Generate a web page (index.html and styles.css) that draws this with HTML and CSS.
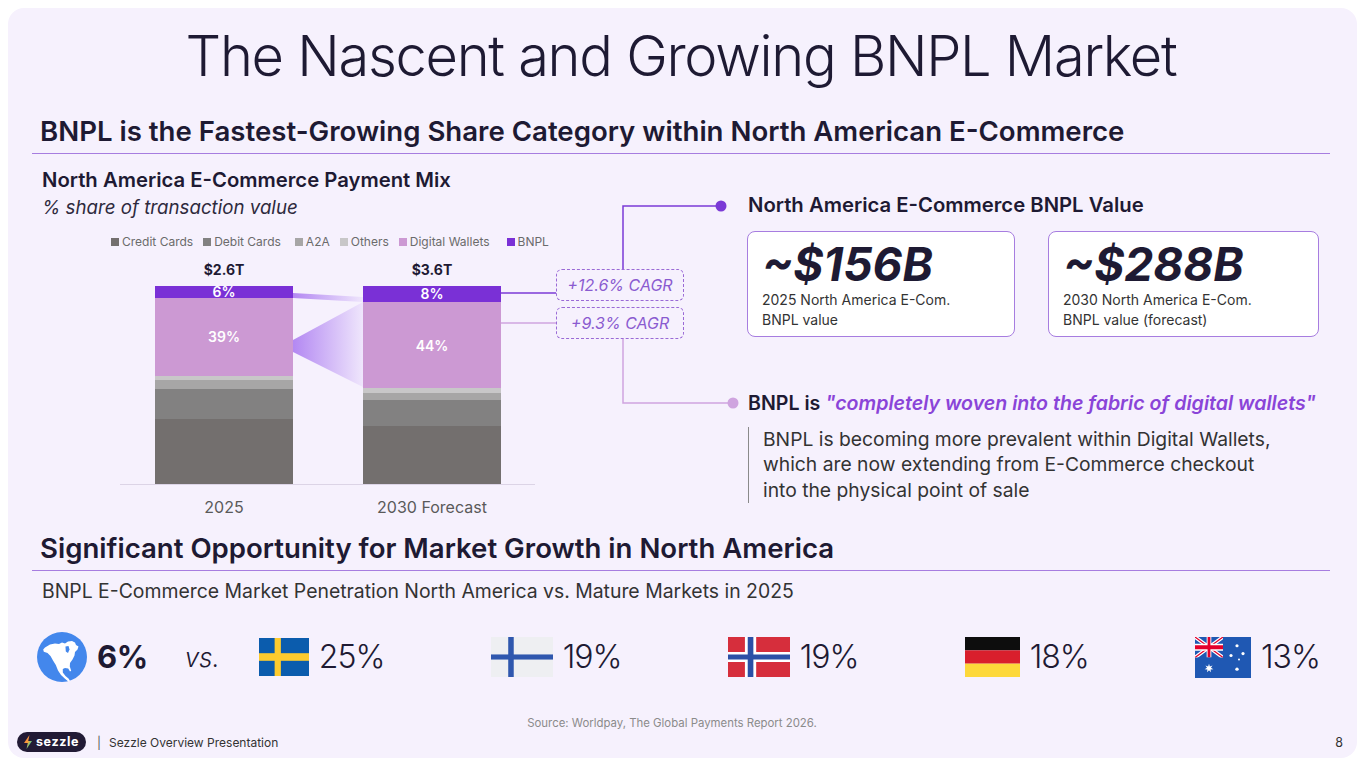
FILE: index.html
```html
<!DOCTYPE html>
<html lang="en">
<head>
<meta charset="utf-8">
<title>The Nascent and Growing BNPL Market</title>
<link rel="stylesheet" href="styles.css">
</head>
<body>
<main class="slide">
  <h1 class="title">The Nascent and Growing BNPL Market</h1>
  <h2 class="section-head">BNPL is the Fastest-Growing Share Category within North American E-Commerce</h2>

  <section class="top-row">
    <div class="chart-col">
      <h3 class="chart-title">North America E-Commerce Payment Mix</h3>
      <p class="chart-sub">% share of transaction value</p>
      <ul class="legend">
        <li><span class="sw sw-credit"></span>Credit Cards</li>
        <li><span class="sw sw-debit"></span>Debit Cards</li>
        <li class="lg-a2a"><span class="sw sw-a2a"></span>A2A</li>
        <li><span class="sw sw-others"></span>Others</li>
        <li><span class="sw sw-dw"></span>Digital Wallets</li>
        <li class="lg-bnpl"><span class="sw sw-bnpl"></span>BNPL</li>
      </ul>
      <svg class="chart" width="516" height="265" viewBox="0 0 516 265">
        <defs>
          <linearGradient id="wedge" x1="0" y1="0" x2="1" y2="0">
            <stop offset="0" stop-color="#b388f2"/>
            <stop offset="1" stop-color="#efe6fc"/>
          </linearGradient>
        </defs>
        <text class="total" x="184" y="20">$2.6T</text>
        <text class="total" x="392" y="20">$3.6T</text>
        <!-- 2025 -->
        <rect x="115" y="164" width="138" height="65" fill="#736f6e"/>
        <rect x="115" y="134" width="138" height="30" fill="#828181"/>
        <rect x="115" y="125" width="138" height="9" fill="#a7a6a6"/>
        <rect x="115" y="121" width="138" height="4" fill="#c8c7c8"/>
        <rect x="115" y="43" width="138" height="78" fill="#cc99d3"/>
        <rect x="115" y="31" width="138" height="12" fill="#7a30d6"/>
        <!-- 2030 -->
        <rect x="323" y="171" width="138" height="58" fill="#736f6e"/>
        <rect x="323" y="145" width="138" height="26" fill="#828181"/>
        <rect x="323" y="138" width="138" height="7" fill="#a7a6a6"/>
        <rect x="323" y="133" width="138" height="5" fill="#c8c7c8"/>
        <rect x="323" y="47" width="138" height="86" fill="#cc99d3"/>
        <rect x="323" y="31" width="138" height="16" fill="#7a30d6"/>
        <!-- wedges -->
        <polygon points="253,38 323,42 323,47 253,43" fill="url(#wedge)"/>
        <polygon points="253,85 323,47 323,132 253,97" fill="url(#wedge)"/>
        <text class="seg" x="184" y="42">6%</text>
        <text class="seg" x="184" y="87">39%</text>
        <text class="seg" x="392" y="44">8%</text>
        <text class="seg" x="392" y="96">44%</text>
        <line x1="80" y1="229.5" x2="495" y2="229.5" stroke="#dcd4e6" stroke-width="1"/>
        <text class="axis" x="184" y="258">2025</text>
        <text class="axis" x="392" y="258">2030 Forecast</text>
        <line x1="461" y1="38" x2="516" y2="38" stroke="#7b3ad6" stroke-width="1.5"/>
        <line x1="461" y1="68" x2="516" y2="68" stroke="#cfa4df" stroke-width="1.5"/>
      </svg>
    </div>

    <div class="link-col">
      <svg class="links" width="189" height="358" viewBox="0 0 189 358">
        <path d="M67 107 V44 H165" fill="none" stroke="#7b3ad6" stroke-width="1.5"/>
        <circle cx="165" cy="44" r="5.5" fill="#7b3ad6"/>
        <path d="M67 177 V241 H177" fill="none" stroke="#cfa4df" stroke-width="1.5"/>
        <circle cx="177" cy="241" r="5.5" fill="#cfa4df"/>
      </svg>
      <div class="cagr cagr-bnpl">+12.6% CAGR</div>
      <div class="cagr cagr-dw">+9.3% CAGR</div>
    </div>

    <div class="info-col">
      <h3 class="info-head">North America E-Commerce BNPL Value</h3>
      <div class="stat-row">
        <div class="stat stat-a">
          <div class="stat-num">~$156B</div>
          <div class="stat-label">2025 North America E-Com.<br>BNPL value</div>
        </div>
        <div class="stat stat-b">
          <div class="stat-num">~$288B</div>
          <div class="stat-label">2030 North America E-Com.<br>BNPL value (forecast)</div>
        </div>
      </div>
      <h3 class="info-head quote-head">BNPL is <em>"completely woven into the fabric of digital wallets"</em></h3>
      <p class="quote-body">BNPL is becoming more prevalent within Digital Wallets,<br>which are now extending from E-Commerce checkout<br>into the physical point of sale</p>
    </div>
  </section>

  <h2 class="section-head section-head-2">Significant Opportunity for Market Growth in North America</h2>
  <p class="pen-sub">BNPL E-Commerce Market Penetration North America vs. Mature Markets in 2025</p>

  <div class="markets">
    <div class="mkt mkt-na">
      <svg class="globe" width="50" height="50" viewBox="0 0 50 50">
        <circle cx="25" cy="25" r="25" fill="#4387ec"/>
        <path d="M8 15.5 L13 12.5 L18 11.5 L22 12 L25 10.5 L28 11.5 L31 9.5 L35 9 L38 10.5 L39 13 L41.5 14.5 L40.5 17.5 L38 20 L37.5 23.5 L35.5 27.5 L33 31 L32.8 34.5 L34.2 38.8 L33 39.5 L31.2 36.5 L28 36 L25.8 37 L25.8 40.5 L28.5 44 L31.5 46.5 L33 48.8 L31 49.2 L28 46.8 L24 43 L21 38.5 L18.8 33 L16 28.5 L13.5 24 L10.5 21 L6.8 19.8 L6.2 17.5 Z" fill="#fff"/>
        <path d="M28.5 14.5 L31.5 14 L32.5 17.5 L31 21 L28.8 19.5 Z" fill="#4387ec"/>
      </svg>
      <span class="pct pct-na">6%</span>
      <span class="vs">vs.</span>
      <svg class="flag flag-se" viewBox="0 0 16 10" preserveAspectRatio="none">
        <rect width="16" height="10" fill="#0b5cad"/>
        <rect x="5" width="2" height="10" fill="#fdcb2e"/>
        <rect y="4" width="16" height="2" fill="#fdcb2e"/>
      </svg>
      <span class="pct">25%</span>
    </div>
    <div class="mkt">
      <svg class="flag flag-fi" viewBox="0 0 18 11" preserveAspectRatio="none">
        <rect width="18" height="11" fill="#eeeff2"/>
        <rect x="5" width="1.6" height="11" fill="#2f57ae"/>
        <rect y="4.8" width="18" height="1.4" fill="#2f57ae"/>
      </svg>
      <span class="pct">19%</span>
    </div>
    <div class="mkt">
      <svg class="flag flag-no" viewBox="0 0 22 16" preserveAspectRatio="none">
        <rect width="22" height="16" fill="#d62e3c"/>
        <rect x="6" width="4" height="16" fill="#fff"/>
        <rect y="6" width="22" height="4" fill="#fff"/>
        <rect x="7" width="2" height="16" fill="#2c50a6"/>
        <rect y="7" width="22" height="2" fill="#2c50a6"/>
      </svg>
      <span class="pct">19%</span>
    </div>
    <div class="mkt">
      <svg class="flag flag-de" viewBox="0 0 5 3" preserveAspectRatio="none">
        <rect width="5" height="1" fill="#0d0d0d"/>
        <rect y="1" width="5" height="1" fill="#d91f2c"/>
        <rect y="2" width="5" height="1" fill="#fdd83a"/>
      </svg>
      <span class="pct">18%</span>
    </div>
    <div class="mkt">
      <svg class="flag flag-au" viewBox="0 0 56 42" preserveAspectRatio="none">
        <defs>
          <clipPath id="uj"><rect width="60" height="30"/></clipPath>
        </defs>
        <rect width="56" height="42" fill="#1f58b3"/>
        <g transform="scale(0.4667 0.7)" clip-path="url(#uj)">
          <path d="M0 0L60 30M60 0L0 30" stroke="#fff" stroke-width="6"/>
          <path d="M0 0L60 30M60 0L0 30" stroke="#e4002b" stroke-width="2"/>
          <path d="M30 0V30M0 15H60" stroke="#fff" stroke-width="10"/>
          <path d="M30 0V30M0 15H60" stroke="#e4002b" stroke-width="6"/>
        </g>
        <polygon points="14,27.5 14.87,30.2 17.52,29.19 15.95,31.56 18.39,33 15.56,33.25 15.95,36.05 14,34 12.05,36.05 12.44,33.25 9.61,33 12.05,31.56 10.48,29.19 13.13,30.2" fill="#fff"/>
        <circle cx="42" cy="9" r="1.6" fill="#fff"/>
        <circle cx="36" cy="19" r="1.6" fill="#fff"/>
        <circle cx="48" cy="17" r="1.6" fill="#fff"/>
        <circle cx="44" cy="23" r="1" fill="#fff"/>
        <circle cx="42" cy="33" r="1.7" fill="#fff"/>
      </svg>
      <span class="pct">13%</span>
    </div>
  </div>

  <p class="source">Source: Worldpay, The Global Payments Report 2026.</p>

  <footer class="foot">
    <div class="logo">
      <svg class="bolt" width="10" height="14" viewBox="0 0 10 14">
        <defs>
          <linearGradient id="boltg" x1="0" y1="0" x2="1" y2="1">
            <stop offset="0" stop-color="#ff6a3d"/>
            <stop offset="0.5" stop-color="#f7a23b"/>
            <stop offset="0.75" stop-color="#3fd29a"/>
            <stop offset="1" stop-color="#8b5cf6"/>
          </linearGradient>
        </defs>
        <path d="M6.5 0 L1 8 H4.8 L3.5 14 L9 6 H5.2 Z" fill="url(#boltg)"/>
      </svg>
      <span class="logo-text">sezzle</span>
    </div>
    <span class="sep">|</span>
    <span class="foot-text">Sezzle Overview Presentation</span>
    <span class="page">8</span>
  </footer>
</main>
</body>
</html>
```

FILE: styles.css
```css
* { box-sizing: border-box; margin: 0; padding: 0; }

html, body {
  width: 1365px;
  height: 768px;
  background: #ffffff;
  overflow: hidden;
}

body {
  font-family: Inter, Roboto, "Liberation Sans", Arial, sans-serif;
  color: #1e1a33;
}

.slide {
  margin: 8px;
  width: 1349px;
  height: 750px;
  border-radius: 16px;
  background: #f6f1fd;
  padding: 15.5px 27px 0 24px;
  display: flex;
  flex-direction: column;
}

.title {
  font-size: 56px;
  font-weight: 300;
  line-height: 64px;
  letter-spacing: -1.3px;
  text-align: center;
  color: #1e1a33;
}

.section-head {
  margin-top: 26.5px;
  font-size: 27.6px;
  font-weight: 600;
  line-height: 34px;
  padding: 0 0 5px 8px;
  border-bottom: 1.5px solid #a77de0;
}

.top-row {
  display: flex;
  margin-top: 7.5px;
  height: 358px;
  padding-left: 8px;
}

.chart-col {
  width: 516px;
  flex: none;
}

.chart-title {
  margin-top: 6px;
  padding-left: 2px;
  font-size: 20.3px;
  font-weight: 600;
  line-height: 24px;
}

.chart-sub {
  margin-top: 4px;
  padding-left: 2px;
  font-size: 18.7px;
  font-style: italic;
  line-height: 24px;
  color: #2e2a3d;
}

.legend {
  list-style: none;
  display: flex;
  gap: 10px;
  margin-top: 14px;
  padding-left: 71px;
  font-size: 12px;
  line-height: 16px;
  color: #6b6b6b;
}

.legend li { display: flex; align-items: center; }
.legend .lg-a2a { margin-left: 4px; }
.legend .lg-bnpl { margin-left: 7px; }

.sw { width: 8px; height: 8px; margin-right: 3px; }
.sw-credit { background: #736f6e; }
.sw-debit { background: #828181; }
.sw-a2a { background: #a7a6a6; }
.sw-others { background: #c8c7c8; }
.sw-dw { background: #cc99d3; }
.sw-bnpl { background: #7a30d6; }

.chart {
  display: block;
  margin-top: 5px;
  overflow: visible;
}

.chart text {
  font-family: Inter, Roboto, "Liberation Sans", Arial, sans-serif;
  text-anchor: middle;
}

.chart .total { font-size: 14px; font-weight: 700; fill: #1e1a33; }
.chart .seg { font-size: 14px; font-weight: 600; fill: #ffffff; }
.chart .axis { font-size: 16px; fill: #5a5a5a; }

.link-col {
  width: 189px;
  flex: none;
  position: relative;
}

.links {
  position: absolute;
  left: 0;
  top: 0;
  overflow: visible;
}

.cagr {
  position: relative;
  width: 128px;
  height: 32px;
  border: 1.5px dashed #9a6ad6;
  border-radius: 6px;
  display: flex;
  align-items: center;
  justify-content: center;
  font-size: 16px;
  font-style: italic;
  color: #8a5bd0;
  background: #f6f1fd;
}

.cagr-bnpl { margin-top: 107px; }
.cagr-dw { margin-top: 6px; }

.info-col {
  flex: 1;
  padding-left: 3px;
}

.info-head {
  margin-top: 31px;
  font-size: 20.3px;
  font-weight: 600;
  line-height: 24px;
}

.stat-row {
  display: flex;
  gap: 33px;
  margin-top: 14px;
  margin-left: -1px;
}

.stat {
  height: 106px;
  background: #ffffff;
  border: 1.5px solid #a77de0;
  border-radius: 8px;
  padding: 9px 14px 0;
}

.stat-a { width: 268px; }
.stat-b { width: 271px; }

.stat-num {
  font-size: 46px;
  font-weight: 700;
  font-style: italic;
  line-height: 46px;
  color: #1e1a33;
}

.stat-label {
  margin-top: 3.5px;
  font-size: 14px;
  line-height: 20px;
  color: #333333;
}

.quote-head {
  margin-top: 54px;
  font-size: 19.6px;
}

.quote-head em {
  color: #8a44d8;
  font-style: italic;
}

.quote-body {
  margin-top: 12px;
  border-left: 1.5px solid #8a8a8a;
  padding-left: 14px;
  font-size: 19.3px;
  line-height: 25.5px;
  color: #333333;
}

.section-head-2 { margin-top: 11px; }

.pen-sub {
  margin-top: 8.5px;
  padding-left: 10px;
  font-size: 19.4px;
  line-height: 24px;
  color: #333333;
}

.markets {
  display: flex;
  justify-content: space-between;
  align-items: center;
  margin-top: 29px;
  height: 50px;
  padding: 0 10px 0 5px;
}

.mkt {
  display: flex;
  align-items: center;
}

.globe { display: block; }

.pct {
  margin-left: 10px;
  font-size: 32px;
  font-weight: 300;
  line-height: 40px;
  letter-spacing: -1px;
  color: #1e1a33;
}

.pct-na {
  font-size: 31px;
  font-weight: 700;
  letter-spacing: -0.5px;
}

.vs {
  margin: 0 39px 0 37px;
  font-size: 26px;
  font-style: italic;
  font-weight: 300;
  color: #1e1a33;
}

.flag { display: block; height: 40px; }
.flag-se { width: 50px; height: 38px; }
.flag-fi { width: 62px; }
.flag-no { width: 62px; }
.flag-de { width: 55px; }
.flag-au { width: 56px; height: 41px; }

.source {
  margin-top: 34px;
  padding-right: 18px;
  font-size: 11.4px;
  line-height: 14px;
  text-align: center;
  color: #8b8b8b;
}

.foot {
  display: flex;
  align-items: center;
  margin: 2px -13px 0 -15px;
  height: 20px;
  font-size: 12px;
  color: #333333;
}

.logo {
  width: 69px;
  height: 20px;
  border-radius: 10px;
  background: #221b35;
  display: flex;
  align-items: center;
  padding-left: 6px;
  gap: 3px;
}

.bolt { display: block; }

.logo-text {
  font-size: 12.5px;
  font-weight: 700;
  letter-spacing: 0.6px;
  color: #ffffff;
  line-height: 20px;
}

.sep { margin-left: 11px; color: #555555; }
.foot-text { margin-left: 8px; }
.page { margin-left: auto; font-size: 12.5px; }
```
